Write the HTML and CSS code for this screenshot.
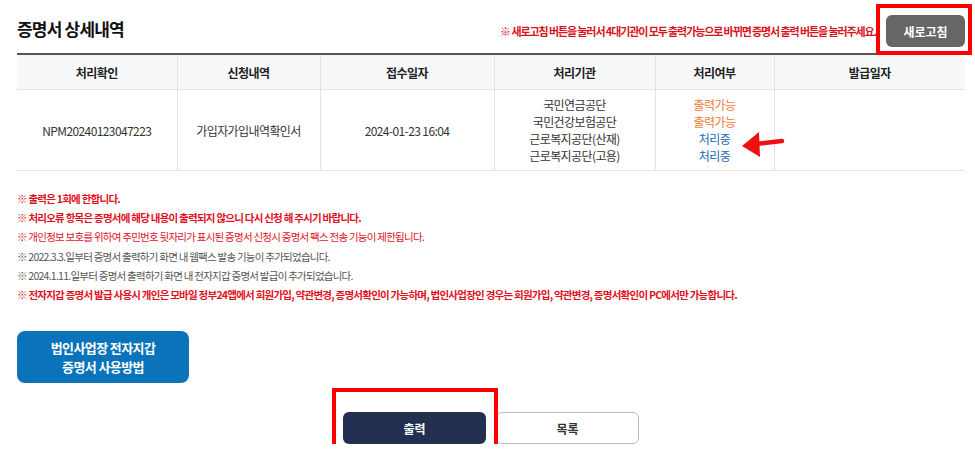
FILE: index.html
```html
<!DOCTYPE html>
<html>
<head>
    <meta charset="utf-8">
    <title>증명서 상세내역</title>
    <link rel="stylesheet" href="styles.css">
</head>
<body>
    <div class="wrap">
        <!-- title bar -->
        <div class="top">
            <h2 class="title">증명서 상세내역</h2>
            <div class="top-right">
                <p class="notice">※ 새로고침 버튼을 눌러서 4대기관이 모두 출력가능으로 바뀌면 증명서 출력 버튼을 눌러주세요.</p>
                <span class="mark mark-refresh">
                    <button type="button" class="btn-refresh">새로고침</button>
                </span>
            </div>
        </div>

        <!-- detail table -->
        <table class="detail">
            <colgroup>
                <col style="width: 160px;">
                <col style="width: 143px;">
                <col style="width: 174px;">
                <col style="width: 161px;">
                <col style="width: 119px;">
                <col>
            </colgroup>
            <tr>
                <th>처리확인</th>
                <th>신청내역</th>
                <th>접수일자</th>
                <th>처리기관</th>
                <th>처리여부</th>
                <th>발급일자</th>
            </tr>
            <tr>
                <td>NPM20240123047223</td>
                <td>가입자가입내역확인서</td>
                <td>2024-01-23 16:04</td>
                <td>
                    국민연금공단<br>
                    국민건강보험공단<br>
                    근로복지공단(산재)<br>
                    근로복지공단(고용)
                </td>
                <td class="status-cell">
                    <span class="ok">출력가능</span><br>
                    <span class="ok">출력가능</span><br>
                    <span class="ing">처리중</span><br>
                    <span class="ing">처리중</span>
                    <svg class="arrow" width="46" height="30" viewBox="0 0 46 30">
                        <path d="M42 12 L16 15" stroke="#ee1111" stroke-width="4.5" stroke-linecap="round" fill="none"/>
                        <path d="M2 17 L19 3 L20 28 Z" fill="#ee1111"/>
                    </svg>
                </td>
                <td></td>
            </tr>
        </table>

        <!-- notes -->
        <ul class="notes">
            <li class="red bold">※ 출력은 1회에 한합니다.</li>
            <li class="red bold">※ 처리오류 항목은 증명서에 해당 내용이 출력되지 않으니 다시 신청 해 주시기 바랍니다.</li>
            <li class="red">※ 개인정보 보호를 위하여 주민번호 뒷자리가 표시된 증명서 신청시 증명서 팩스 전송 기능이 제한됩니다.</li>
            <li class="gray">※ 2022.3.3.일부터 증명서 출력하기 화면 내 웹팩스 발송 기능이 추가되었습니다.</li>
            <li class="gray">※ 2024.1.11.일부터 증명서 출력하기 화면 내 전자지갑 증명서 발급이 추가되었습니다.</li>
            <li class="red bold">※ 전자지갑 증명서 발급 사용시 개인은 모바일 정부24앱에서 회원가입, 약관변경, 증명서확인이 가능하며, 법인사업장인 경우는 회원가입, 약관변경, 증명서확인이 PC에서만 가능합니다.</li>
        </ul>

        <button type="button" class="btn-guide">법인사업장 전자지갑<br>증명서 사용방법</button>

        <!-- bottom buttons -->
        <div class="actions">
            <span class="mark mark-print">
                <button type="button" class="btn-print">출력</button>
            </span>
            <button type="button" class="btn-list">목록</button>
        </div>
    </div>
</body>
</html>
```

FILE: styles.css
```css
/* page */
body {
    margin: 0;
    background-color: #fff;
    font-family: "Noto Sans CJK KR", "Noto Sans", sans-serif;
    color: #333;
}

.wrap {
    padding: 0 10px 0 17px;
}

/* title bar */
.top {
    display: flex;
    justify-content: space-between;
    align-items: flex-end;
    height: 53px;
}

.title {
    margin: 0 0 12px;
    font-size: 17px;
    font-weight: bold;
    color: #111;
    letter-spacing: -0.8px;
}

.top-right {
    display: flex;
    align-items: center;
    padding-bottom: 6px;
}

.notice {
    margin: 0 10px 0 0;
    font-size: 11px;
    font-weight: bold;
    color: #d7141e;
    letter-spacing: -1.1px;
}

.mark {
    position: relative;
    display: inline-block;
}

.mark::after {
    content: "";
    position: absolute;
    border: 4px solid #ff0000;
    pointer-events: none;
}

.mark-refresh::after {
    inset: -11px -7px -8px -10px;
}

.mark-print::after {
    inset: -24px -12px -12px -11px;
}

.btn-refresh {
    display: block;
    width: 79px;
    height: 32px;
    border: 0;
    border-radius: 6px;
    background-color: #666;
    color: #fff;
    font-family: inherit;
    font-size: 12px;
    font-weight: bold;
}

/* table */
.detail {
    width: 100%;
    border-collapse: collapse;
    table-layout: fixed;
    border-top: 2px solid #555;
    font-size: 12px;
    letter-spacing: -0.6px;
}

.detail th,
.detail td {
    border-right: 1px solid #e3e3e3;
    border-bottom: 1px solid #e3e3e3;
    text-align: center;
    vertical-align: middle;
}

.detail th:last-child,
.detail td:last-child {
    border-right: 0;
}

.detail th {
    height: 32px;
    background-color: #f7f8fa;
    color: #222;
    font-weight: bold;
}

.detail td {
    height: 78px;
    line-height: 17px;
    color: #333;
}

.status-cell {
    position: relative;
}

.ok {
    color: #f07a35;
}

.ing {
    color: #2369b1;
}

.arrow {
    position: absolute;
    left: 84px;
    top: 39px;
}

/* notes */
.notes {
    list-style: none;
    margin: 18px 0 0;
    padding: 0;
    font-size: 10.5px;
    line-height: 19.2px;
    letter-spacing: -0.75px;
}

.red {
    color: #e2101d;
}

.gray {
    color: #555;
}

.bold {
    font-weight: bold;
}

/* guide button */
.btn-guide {
    display: block;
    width: 172px;
    height: 52px;
    margin-top: 27px;
    border: 0;
    border-radius: 8px;
    background-color: #0b73ba;
    color: #fff;
    font-family: inherit;
    font-size: 13px;
    font-weight: bold;
    line-height: 19px;
    letter-spacing: -0.6px;
}

/* bottom buttons */
.actions {
    display: flex;
    justify-content: center;
    gap: 10px;
    margin-top: 29px;
}

.btn-print,
.btn-list {
    display: block;
    width: 143px;
    height: 32px;
    border-radius: 6px;
    font-family: inherit;
    font-size: 12px;
}

.btn-print {
    border: 0;
    background-color: #222f50;
    color: #fff;
    font-weight: bold;
}

.btn-list {
    border: 1px solid #bbb;
    background-color: #fff;
    color: #333;
    font-weight: bold;
}
```
